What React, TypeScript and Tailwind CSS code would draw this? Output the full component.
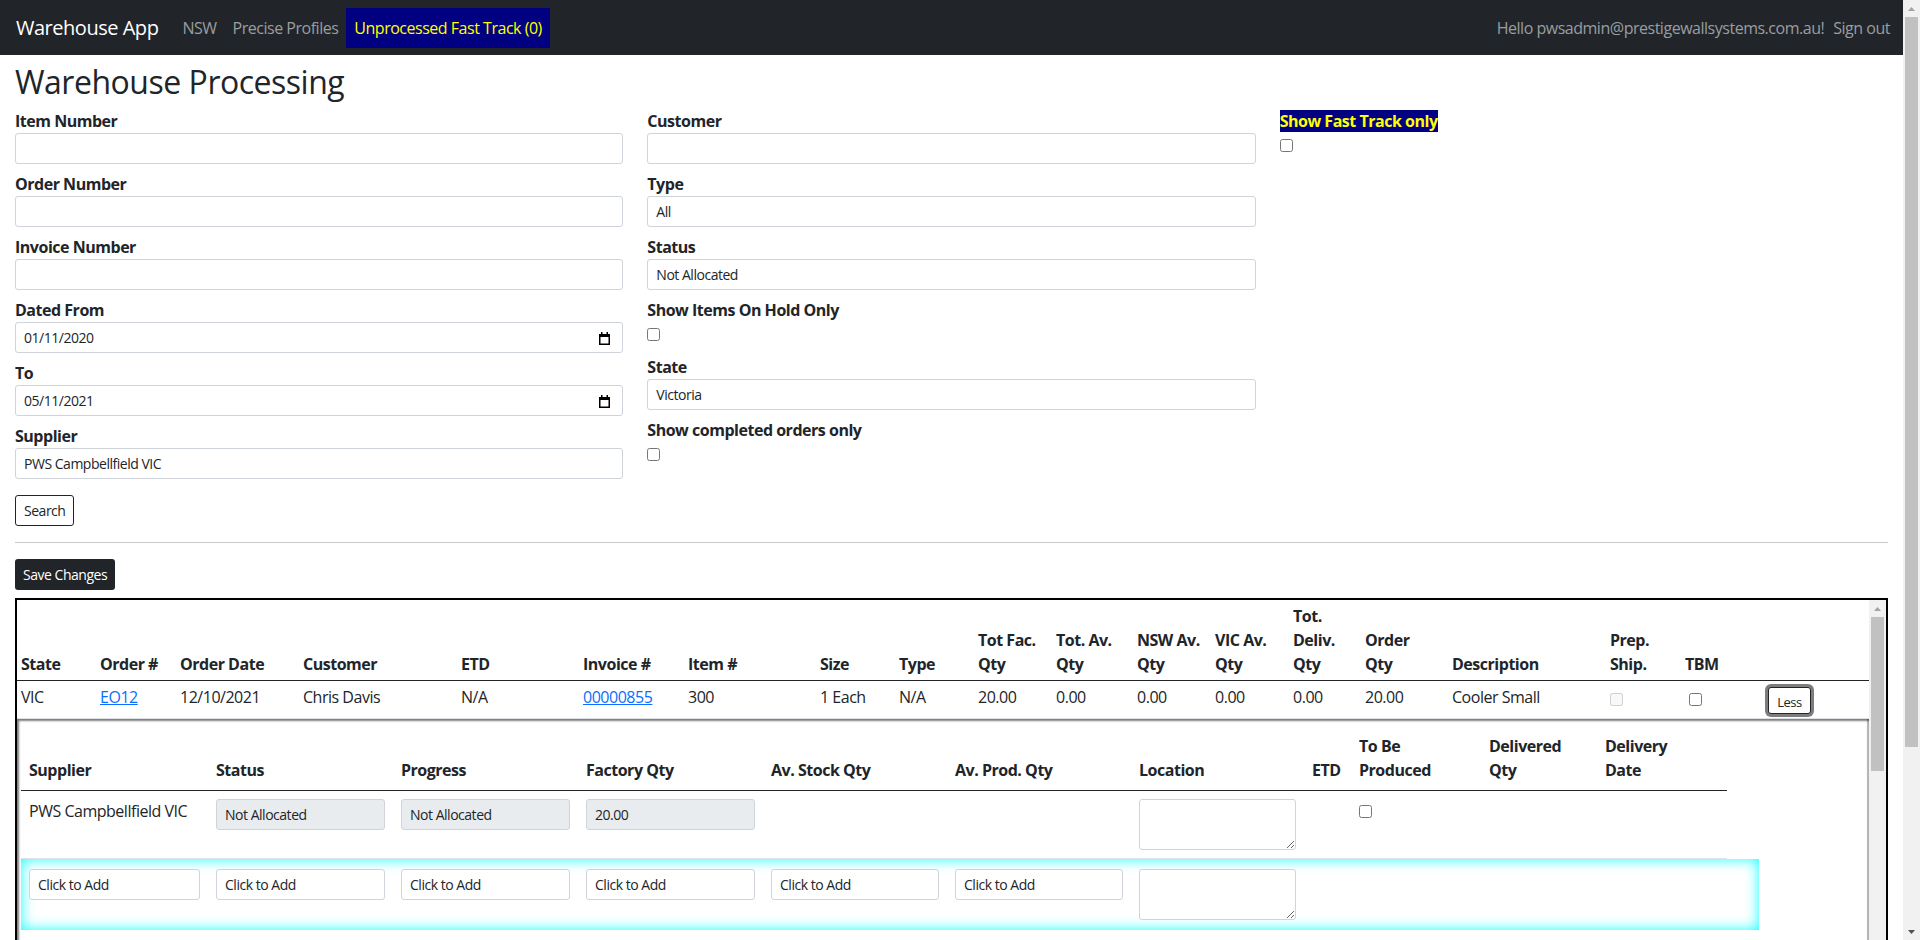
import React from "react";

const mainCols = [79, 80, 123, 158, 122, 105, 132, 79, 79, 78, 81, 78, 78, 72, 87, 158, 75, 74, 114];
const subCols = [187, 185, 185, 185, 184, 184, 173, 47, 130, 116, 130];

const mainHeads: string[][] = [
  ["State"],
  ["Order #"],
  ["Order Date"],
  ["Customer"],
  ["ETD"],
  ["Invoice #"],
  ["Item #"],
  ["Size"],
  ["Type"],
  ["Tot Fac.", "Qty"],
  ["Tot. Av.", "Qty"],
  ["NSW Av.", "Qty"],
  ["VIC Av.", "Qty"],
  ["Tot.", "Deliv.", "Qty"],
  ["Order", "Qty"],
  ["Description"],
  ["Prep.", "Ship."],
  ["TBM"],
  [""],
];

const subHeads: string[][] = [
  ["Supplier"],
  ["Status"],
  ["Progress"],
  ["Factory Qty"],
  ["Av. Stock Qty"],
  ["Av. Prod. Qty"],
  ["Location"],
  ["ETD"],
  ["To Be", "Produced"],
  ["Delivered", "Qty"],
  ["Delivery", "Date"],
];

interface IOrder {
  order: string;
  date: string;
  customer: string;
  invoice: string;
  item: string;
  size: string;
  fac: string;
  qty: string;
  desc: string;
}

const moreOrders: IOrder[] = [
  { order: "EO13", date: "13/10/2021", customer: "Mark Jones", invoice: "00000861", item: "410", size: "1 Each", fac: "12.00", qty: "12.00", desc: "Cooler Large" },
  { order: "EO14", date: "14/10/2021", customer: "Sarah Lee", invoice: "00000866", item: "215", size: "1 Each", fac: "8.00", qty: "8.00", desc: "Panel Clip" },
  { order: "EO15", date: "15/10/2021", customer: "Tom Baker", invoice: "00000870", item: "300", size: "1 Each", fac: "4.00", qty: "4.00", desc: "Cooler Small" },
  { order: "EO16", date: "18/10/2021", customer: "Anna White", invoice: "00000874", item: "122", size: "1 Each", fac: "30.00", qty: "30.00", desc: "Wall Bracket" },
];

const inputBase =
  "block w-full h-[31px] rounded-[3px] border border-[#ced4da] px-2 text-[14px] text-[#212529] outline-none";
const inputCls = inputBase + " bg-white";
const readCls = inputBase + " bg-[#e9ecef]";
const labelCls = "block text-[16px] leading-6 font-bold";

// windows style scrollbar, drawn
const Scrollbar = ({ thumbCls, down }: { thumbCls: string; down?: boolean }) => (
  <div className="flex w-[17px] shrink-0 flex-col bg-[#f1f1f1]">
    <div className="flex h-[17px] shrink-0 items-center justify-center">
      <svg width="7" height="4" viewBox="0 0 7 4">
        <path d="M0 4 L3.5 0 L7 4 Z" fill="#a3a3a3" />
      </svg>
    </div>
    <div className={"mx-[2px] shrink-0 bg-[#c1c1c1] " + thumbCls} />
    {down && (
      <div className="mt-auto flex h-[17px] shrink-0 items-center justify-center">
        <svg width="7" height="4" viewBox="0 0 7 4">
          <path d="M0 0 L3.5 4 L7 0 Z" fill="#505050" />
        </svg>
      </div>
    )}
  </div>
);

const Field = ({ label, value }: { label: string; value?: string }) => (
  <div className="mb-2">
    <label className={labelCls}>{label}</label>
    <input className={inputCls} defaultValue={value ?? ""} />
  </div>
);

const DateField = ({ label, value }: { label: string; value: string }) => (
  <div className="mb-2">
    <label className={labelCls}>{label}</label>
    <div className="flex h-[31px] items-center justify-between rounded-[3px] border border-[#ced4da] bg-white pl-2 pr-[11px] text-[14px]">
      <span>{value}</span>
      <svg width="13" height="14" viewBox="0 0 13 14">
        <rect x="1.75" y="3.75" width="9.5" height="9.5" fill="none" stroke="#000" strokeWidth="1.5" />
        <rect x="1" y="3" width="11" height="3" fill="#000" />
        <rect x="3" y="1" width="1.5" height="3" fill="#000" />
        <rect x="8.5" y="1" width="1.5" height="3" fill="#000" />
      </svg>
    </div>
  </div>
);

const CheckField = ({ label }: { label: string }) => (
  <div className="h-[57px]">
    <label className={labelCls}>{label}</label>
    <input type="checkbox" className="m-0 mt-[6px] block h-[13px] w-[13px]" />
  </div>
);

const HeadCell = ({ lines, cls }: { lines: string[]; cls: string }) => (
  <th className={cls}>
    {lines.map((l, i) => (
      <React.Fragment key={i}>
        {i > 0 && <br />}
        {l}
      </React.Fragment>
    ))}
  </th>
);

const OrderRow = ({ o }: { o: IOrder }) => (
  <tr className="border-b border-[#dee2e6] align-top">
    <td className="px-1 py-1 leading-6">VIC</td>
    <td className="px-1 py-1 leading-6">
      <a className="text-[#0d6efd] underline">{o.order}</a>
    </td>
    <td className="px-1 py-1 leading-6">{o.date}</td>
    <td className="px-1 py-1 leading-6">{o.customer}</td>
    <td className="px-1 py-1 leading-6">N/A</td>
    <td className="px-1 py-1 leading-6">
      <a className="text-[#0d6efd] underline">{o.invoice}</a>
    </td>
    <td className="px-1 py-1 leading-6">{o.item}</td>
    <td className="px-1 py-1 leading-6">{o.size}</td>
    <td className="px-1 py-1 leading-6">N/A</td>
    <td className="px-1 py-1 leading-6">{o.fac}</td>
    <td className="px-1 py-1 leading-6">0.00</td>
    <td className="px-1 py-1 leading-6">0.00</td>
    <td className="px-1 py-1 leading-6">0.00</td>
    <td className="px-1 py-1 leading-6">0.00</td>
    <td className="px-1 py-1 leading-6">{o.qty}</td>
    <td className="px-1 py-1 leading-6">{o.desc}</td>
    <td className="px-1 py-1">
      <input type="checkbox" disabled className="m-0 mt-[8px] block h-[13px] w-[13px]" />
    </td>
    <td className="px-1 py-1">
      <input type="checkbox" className="m-0 ml-[4px] mt-[8px] block h-[13px] w-[13px]" />
    </td>
    <td className="px-1 py-1">
      <button className="ml-[9px] mt-[2px] h-[27px] w-[43px] rounded-[3px] border border-[#212529] bg-white pt-[3px] text-[13px] leading-none ring-[3px] ring-[#7d7d7d]">
        Less
      </button>
    </td>
  </tr>
);

const App = () => {
  return (
    <div className="flex h-screen bg-white font-['Open_Sans',sans-serif] text-[16px] tracking-[-0.03em] text-[#212529]">
      <div className="min-w-0 flex-1 overflow-y-auto [scrollbar-width:none]">
        <nav className="flex h-[55px] items-center bg-[#212529] pl-4 pr-[13px]">
          <span className="mr-4 py-[5px] text-[20px] leading-[30px] text-white">Warehouse App</span>
          <a className="px-2 py-2 leading-6 text-[#9a9da0]">NSW</a>
          <a className="px-2 py-2 leading-6 text-[#9a9da0]">Precise Profiles</a>
          <a className="bg-[#000080] px-2 py-2 leading-6 text-[#ffff00]">Unprocessed Fast Track (0)</a>
          <div className="ml-auto flex items-center gap-[9px] leading-6 text-[#9a9da0]">
            <span>Hello pwsadmin@prestigewallsystems.com.au!</span>
            <a>Sign out</a>
          </div>
        </nav>

        <main className="px-[15px] pb-[9px] pt-2">
          <h2 className="mb-2 text-[32px] font-medium leading-[1.2]">Warehouse Processing</h2>

          <div className="grid grid-cols-3 gap-x-6">
            <div>
              <Field label="Item Number" />
              <Field label="Order Number" />
              <Field label="Invoice Number" />
              <DateField label="Dated From" value="01/11/2020" />
              <DateField label="To" value="05/11/2021" />
              <Field label="Supplier" value="PWS Campbellfield VIC" />
              <button className="mt-2 h-[31px] rounded-[3px] border border-[#212529] bg-white px-2 text-[14px]">Search</button>
            </div>
            <div>
              <Field label="Customer" />
              <Field label="Type" value="All" />
              <Field label="Status" value="Not Allocated" />
              <CheckField label="Show Items On Hold Only" />
              <Field label="State" value="Victoria" />
              <CheckField label="Show completed orders only" />
            </div>
            <div>
              <div className="leading-6">
                <span className="bg-[#000080] font-bold text-[#ffff00]">Show Fast Track only</span>
              </div>
              <input type="checkbox" className="m-0 mt-[6px] block h-[13px] w-[13px]" />
            </div>
          </div>

          <hr className="my-4 border-t border-[#c8c9ca]" />

          <button className="mb-2 h-[31px] rounded-[3px] bg-[#212529] px-2 text-[14px] text-white">Save Changes</button>

          <div className="flex h-[560px] border-2 border-black">
            <div className="min-w-0 flex-1 overflow-y-auto [scrollbar-width:none]">
              <table className="w-full table-fixed border-collapse">
                <colgroup>
                  {mainCols.map((w, i) => (
                    <col key={i} style={{ width: w }} />
                  ))}
                </colgroup>
                <thead>
                  <tr className="border-b border-[#212529]">
                    {mainHeads.map((h, i) => (
                      <HeadCell key={i} lines={h} cls="whitespace-nowrap px-1 py-1 text-left align-bottom font-bold leading-6" />
                    ))}
                  </tr>
                </thead>
                <tbody>
                  <OrderRow
                    o={{ order: "EO12", date: "12/10/2021", customer: "Chris Davis", invoice: "00000855", item: "300", size: "1 Each", fac: "20.00", qty: "20.00", desc: "Cooler Small" }}
                  />
                  <tr>
                    <td colSpan={19} className="px-1 pb-6 pt-[7px] shadow-[inset_2px_2px_2px_rgba(0,0,0,0.5),inset_-2px_0_1px_rgba(0,0,0,0.3)]">
                      <table className="w-[1706px] table-fixed border-collapse">
                        <colgroup>
                          {subCols.map((w, i) => (
                            <col key={i} style={{ width: w }} />
                          ))}
                        </colgroup>
                        <thead>
                          <tr className="border-b border-[#212529]">
                            {subHeads.map((h, i) => (
                              <HeadCell key={i} lines={h} cls="whitespace-nowrap px-2 py-2 text-left align-bottom font-bold leading-6" />
                            ))}
                          </tr>
                        </thead>
                        <tbody>
                          <tr className="border-b border-[#dee2e6] align-top">
                            <td className="px-2 py-2 leading-6">PWS Campbellfield VIC</td>
                            <td className="px-2 py-2">
                              <input readOnly className={readCls} defaultValue="Not Allocated" />
                            </td>
                            <td className="px-2 py-2">
                              <input readOnly className={readCls} defaultValue="Not Allocated" />
                            </td>
                            <td className="px-2 py-2">
                              <input readOnly className={readCls} defaultValue="20.00" />
                            </td>
                            <td className="px-2 py-2" />
                            <td className="px-2 py-2" />
                            <td className="px-2 py-2">
                              <textarea className="block h-[51px] w-full rounded-[3px] border border-[#ced4da] bg-white text-[14px] outline-none" />
                            </td>
                            <td className="px-2 py-2" />
                            <td className="px-2 py-2">
                              <input type="checkbox" className="m-0 mt-[6px] block h-[13px] w-[13px]" />
                            </td>
                            <td className="px-2 py-2" />
                            <td className="px-2 py-2" />
                          </tr>
                        </tbody>
                      </table>
                      <div className="w-[1738px] bg-white py-[2px] shadow-[inset_0_0_14px_rgba(0,255,255,0.95)]">
                        <table className="w-[1706px] table-fixed border-collapse">
                          <colgroup>
                            {subCols.map((w, i) => (
                              <col key={i} style={{ width: w }} />
                            ))}
                          </colgroup>
                          <tbody>
                            <tr className="align-top">
                              {[0, 1, 2, 3, 4, 5].map((i) => (
                                <td key={i} className="px-2 py-2">
                                  <input className={inputCls + " placeholder:text-[#212529]"} placeholder="Click to Add" />
                                </td>
                              ))}
                              <td className="px-2 py-2">
                                <textarea className="block h-[51px] w-full rounded-[3px] border border-[#ced4da] bg-white text-[14px] outline-none" />
                              </td>
                              <td />
                              <td />
                              <td />
                              <td />
                            </tr>
                          </tbody>
                        </table>
                      </div>
                    </td>
                  </tr>
                  {[...moreOrders, ...moreOrders, ...moreOrders].map((o, i) => (
                    <OrderRow key={i} o={o} />
                  ))}
                </tbody>
              </table>
            </div>
            <Scrollbar thumbCls="h-[154px]" />
          </div>
        </main>
      </div>
      <Scrollbar thumbCls="h-[730px]" down />
    </div>
  );
};

export default App;
